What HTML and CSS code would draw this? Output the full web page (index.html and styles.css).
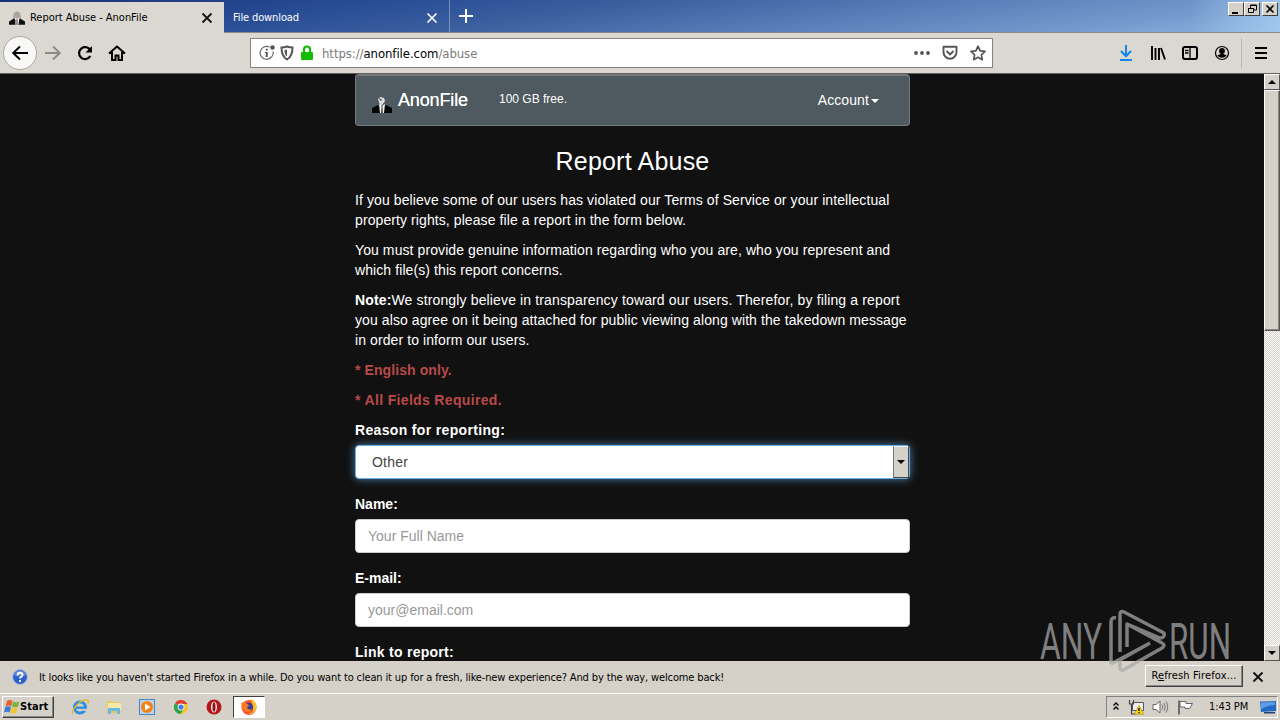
FILE: index.html
```html
<!DOCTYPE html>
<html lang="en">
<head>
<meta charset="utf-8">
<title>Report Abuse - AnonFile</title>
<link rel="stylesheet" href="styles.css">
</head>
<body>
<div class="desktop">
  <header class="titlebar">
    <div class="tab active">
      <svg class="favicon" width="16" height="14" viewBox="0 0 20 17"><path d="M6 2 10 0l4 2 1 7H5z" fill="#aaa69e"/><path d="M0 17v-4l6-4 4 3 4-3 6 4v4z" fill="#111"/><path d="m8 8 2 2 3-2-1 9H8z" fill="#eee"/><path d="m9 10 2 0 0 7-2 0z" fill="#777"/></svg>
      <span class="t-active">Report Abuse - AnonFile</span>
      <svg class="close" width="12" height="12" viewBox="0 0 12 12"><path d="m1.500 1.500 9 9m0-9-9 9" stroke="#111" stroke-width="1.800"/></svg>
    </div>
    <div class="tab second">
      <span class="t-second">File download</span>
      <svg class="close" width="12" height="12" viewBox="0 0 12 12"><path d="m1.500 1.500 9 9m0-9-9 9" stroke="#fff" stroke-width="1.600"/></svg>
    </div>
    <svg class="plus" width="14" height="14" viewBox="0 0 14 14"><path d="M7 0v14M0 7h14" stroke="#fff" stroke-width="2"/></svg>
    <div class="winbtns">
      <span class="wbtn"><svg width="14" height="12"><path d="M3 9h6v2H3z"/></svg></span>
      <span class="wbtn"><svg width="14" height="12"><path d="M5.500 5V2h6v5H9M5 2.500h7M3.500 5.500h5v4h-5zM3 5.500h6" fill="none" stroke="#000"/></svg></span>
      <span class="wbtn last"><svg width="14" height="12"><path d="m3.500 2.500 7 7m0-7-7 7" stroke="#000" stroke-width="1.600"/></svg></span>
    </div>
  </header>

  <nav class="toolbar">
    <div class="navbtns">
      <span class="back"><svg width="18" height="16" viewBox="0 0 18 16"><path d="M17 8H2m7-6.500L2.200 8 9 14.500" fill="none" stroke="#000" stroke-width="2"/></svg></span>
      <svg width="18" height="16" viewBox="0 0 18 16"><path d="M1 8h15M9 1.500 15.800 8 9 14.500" fill="none" stroke="#8d8a86" stroke-width="1.800"/></svg>
      <svg width="18" height="16" viewBox="0 0 18 16"><path d="M14.500 5.500A6 6 0 1 0 14.300 11" fill="none" stroke="#000" stroke-width="2.200"/><path d="M16 1v6.500H9.500z"/></svg>
      <svg width="18" height="16" viewBox="0 0 18 16"><path d="m1 8.500 8-7 8 7M4 7v8h3.500v-4.500h3V15H14V7" fill="none" stroke="#000" stroke-width="2"/></svg>
    </div>
    <div class="urlbar">
      <svg width="16" height="16" viewBox="0 0 16 16"><path d="M10.500 2A6.500 6.500 0 1 0 14 6.500" fill="none" stroke="#666" stroke-width="1.200"/><circle cx="13.500" cy="2.500" r="2.300" fill="#555"/><path d="M6.800 3.700h1.900v1.900H6.800zM6 7h2.700v5H6.800V8H6z" fill="#555"/></svg>
      <svg class="shield" width="14" height="16" viewBox="0 0 14 16"><path d="M7 1.500c2 .8 3.500 1 5.500 1 0 6-1 9.500-5.500 12C2.500 12 1.500 8.500 1.500 2.500c2 0 3.500-.2 5.500-1z" fill="none" stroke="#555" stroke-width="2"/><path d="M7 4.500c-1.200.5-1.600.5-2.600.7.200 3 .8 5 2.600 6.300z" fill="#555"/></svg>
      <svg class="lock" width="14" height="16" viewBox="0 0 14 16"><path d="M4 8V4.500a3 3 0 0 1 6 0V8" fill="none" stroke="#12bc00" stroke-width="2.200"/><rect x="1" y="7" width="12" height="8" rx="1" fill="#12bc00"/></svg>
      <span class="url"><i>https://</i>anonfile.com<i>/abuse</i></span>
      <div class="urlicons">
        <svg width="16" height="16" viewBox="0 0 16 16"><g fill="#555"><circle cx="2" cy="8" r="1.900"/><circle cx="8" cy="8" r="1.900"/><circle cx="14" cy="8" r="1.900"/></g></svg>
        <svg width="16" height="16" viewBox="0 0 16 16"><path d="M1.500 1.700h13v5.500a6.500 6.500 0 0 1-13 0z" fill="none" stroke="#555" stroke-width="1.900" stroke-linejoin="round"/><path d="m4.500 6 3.500 3.500L11.500 6" fill="none" stroke="#555" stroke-width="1.900"/></svg>
        <svg width="16" height="16" viewBox="0 0 16 16"><path d="m8 1.200 2.100 4.600 4.900.6-3.600 3.400.9 4.900L8 12.300l-4.300 2.400.9-4.900L1 6.400l4.900-.6z" fill="none" stroke="#555" stroke-width="1.700" stroke-linejoin="round"/></svg>
      </div>
    </div>
    <div class="tools">
      <svg width="16" height="16" viewBox="0 0 16 16"><path d="M8 0v11M3 6l5 5.200L13 6M2 15h12" fill="none" stroke="#1486f0" stroke-width="2"/></svg>
      <svg width="16" height="16" viewBox="0 0 16 16"><path d="M2 1v14M5.500 3v12M9 3v12M11 3l4 11.500" fill="none" stroke="#000" stroke-width="1.900"/></svg>
      <svg width="16" height="16" viewBox="0 0 16 16"><rect x="1" y="2" width="14" height="12" rx="2" fill="none" stroke="#000" stroke-width="2"/><path d="M8 2v12M3 5.500h3.500M3 8h3.500" stroke="#000" stroke-width="1.300"/></svg>
      <svg width="16" height="16" viewBox="0 0 16 16"><circle cx="8" cy="8" r="6.500" fill="none" stroke="#000" stroke-width="1.200"/><circle cx="8" cy="6" r="2.900"/><path d="M3.500 10.500c2-2 7-2 9 0-2 3-7 3-9 0z"/></svg>
      <span class="sep"></span>
      <svg width="14" height="14" viewBox="0 0 14 14"><path d="M1 2h12M1 7h12M1 12h12" stroke="#000" stroke-width="2"/></svg>
    </div>
  </nav>

  <div class="viewport">
    <main class="page">
      <div class="container">
        <div class="navbar">
          <svg class="logo" width="20" height="17" viewBox="0 0 20 17"><path d="M6 3 8 1l4 1 1 3-3 4H8z" fill="#dfe2e3"/><path d="m6 1 3 4 1-1z" fill="#20282c"/><path d="M0 17v-5l6-3 4 3 4-3 6 3v5z" fill="#050505"/><path d="m7 8 3 2 3-2-1 9H8z" fill="#f4f4f4"/><path d="m9.500 10 1 0 .5 7H9z" fill="#555"/></svg>
          <span class="brand">AnonFile</span>
          <span class="free">100 GB free.</span>
          <span class="account">Account</span><span class="caret"></span>
        </div>
        <h1>Report Abuse</h1>
        <p>If you believe some of our users has violated our Terms of Service or your intellectual<br>property rights, please file a report in the form below.</p>
        <p>You must provide genuine information regarding who you are, who you represent and<br>which file(s) this report concerns.</p>
        <p><span class="loose"><b>Note:</b>We strongly believe in transparency toward our users. Therefor, by filing a report</span><br>you also agree on it being attached for public viewing along with the takedown message<br>in order to inform our users.</p>
        <p class="danger">* English only.</p>
        <p class="danger wide">* All Fields Required.</p>
        <div class="label wide">Reason for reporting:</div>
        <div class="field select"><span>Other</span><i class="drop"></i></div>
        <div class="label">Name:</div>
        <div class="field">Your Full Name</div>
        <div class="label">E-mail:</div>
        <div class="field">your@email.com</div>
        <div class="label link">Link to report:</div>
      </div>
    </main>
    <div class="scrollbar">
      <span class="sbtn up"></span>
      <span class="thumb"></span>
      <span class="track"></span>
      <span class="sbtn down"></span>
    </div>
  </div>

  <div class="notice">
    <svg width="16" height="16" viewBox="0 0 16 16"><circle cx="8" cy="8" r="7.400" fill="#2c5fc9" stroke="#a9bddf"/><path d="M2 6a6.300 6.300 0 0 1 12 0c-3 2-9 2-12 0z" fill="#7ea6ea" opacity=".6"/><path d="M5.600 6.200c0-3.300 5-3.200 4.900-.2C10.500 7.800 8 7.800 8 9.600M8 11v2" fill="none" stroke="#fff" stroke-width="1.900"/></svg>
    <span class="msg">It looks like you haven't started Firefox in a while. Do you want to clean it up for a fresh, like-new experience? And by the way, welcome back!</span>
    <span class="refresh"><span>R<u>e</u>fresh Firefox...</span></span>
    <svg class="nclose" width="12" height="12" viewBox="0 0 12 12"><path d="m1.500 1.500 9 9m0-9-9 9" stroke="#111" stroke-width="1.900"/></svg>
  </div>

  <footer class="taskbar">
    <span class="start">
      <svg width="16" height="16" viewBox="0 0 16 16"><path d="M3 2q2.500-1.800 5.500 0L7.300 7.300q-2.500-1.500-5.800 0z" fill="#e8622a"/><path d="M9 2.500q2.500 1.600 6.500 0l-1.500 5.300q-2.800 1.300-6 0z" fill="#7cb642"/><path d="M1.300 8q2.500-1.500 5.700 0L5.700 13.500q-2.500-1.500-5.700 0z" fill="#3a7bd5"/><path d="M7.600 8.500q2.500 1.400 6.100 0L12.300 14q-3 1.200-6-.3z" fill="#f7c62f"/></svg>
      <b>Start</b>
    </span>
    <div class="launch">
      <svg width="18" height="18" viewBox="0 0 18 18"><circle cx="9" cy="9.500" r="5.500" fill="none" stroke="#2b8fdf" stroke-width="3"/><path d="M4 8.500h11v2.300H4z" fill="#2b8fdf"/><path d="M12 10.800h5v2h-5z" fill="#d4d0c8"/><path d="M2 16C-1 12 12-1 17 2.500c1 1-.5 3-.5 3" fill="none" stroke="#e8b92e" stroke-width="1.400"/></svg>
      <svg width="18" height="18" viewBox="0 0 18 18"><path d="M2 3h5l1 1h8v11H2z" fill="#e9c85e"/><path d="M3 5h13v8H3z" fill="#f8e9a6"/><path d="M3 10h12v6h-3v-3H6v3H3z" fill="#69b8e6"/></svg>
      <svg width="18" height="18" viewBox="0 0 18 18"><rect x="1.500" y="1.500" width="15" height="15" fill="#b9d5ee" stroke="#4b86c3"/><circle cx="9" cy="9" r="6" fill="#f58216"/><path d="m7 5.500 5.500 3.500L7 12.500z" fill="#fff"/></svg>
      <svg width="18" height="18" viewBox="0 0 18 18"><circle cx="9" cy="9" r="7" fill="#f4c522"/><path d="M9 9 3 5.200A7 7 0 0 1 15.300 6H9z" fill="#df4034"/><path d="M3 5.200A7 7 0 0 0 8.500 16L12 10.500 9 9z" fill="#2fa350"/><circle cx="9" cy="9" r="3.400" fill="#fff"/><circle cx="9" cy="9" r="2.600" fill="#3f7fe8"/></svg>
      <svg width="18" height="18" viewBox="0 0 18 18"><circle cx="9" cy="9" r="7.500" fill="#b5161b"/><ellipse cx="9" cy="9" rx="3" ry="5.600" fill="#f4eaea"/><ellipse cx="9" cy="9" rx="1.500" ry="4.800" fill="#8d1115"/></svg>
    </div>
    <span class="running">
      <svg width="18" height="18" viewBox="0 0 18 18"><circle cx="9" cy="9.500" r="7.500" fill="#f5542a"/><path d="M11 1c5 2 6.500 7 5 10.500S10 17.500 7 15.500c5 .5 7-3 6-6.500z" fill="#fdc229"/><circle cx="8.800" cy="9" r="4.300" fill="#37409b"/><path d="M2 4c1 1 2 1 3.500 1C7 6 9 6.500 9 8c-2 0-2.500 2-1 3 2 1 3 .5 4 0-1 3-5 4-8 1.500S1 6 2 4z" fill="#fb7a22"/></svg>
    </span>
    <div class="tray">
      <svg width="8" height="12" viewBox="0 0 8 12"><path d="m1.500 4.500 2.500-2.500 2.500 2.500M1.500 8.500l2.500-2.500 2.500 2.500" fill="none" stroke="#000" stroke-width="1.400"/></svg>
      <svg width="16" height="16" viewBox="0 0 16 16"><path d="M4.500 3.500h11v8h-11z" fill="#eee" stroke="#555"/><path d="M1.500 1v4h4V1M3.500 5v10h5" fill="none" stroke="#444" stroke-width="1.200"/><path d="m11 6.500 4.800 8.800H6.300z" fill="#f9d71c" stroke="#a98900" stroke-width=".6"/><path d="M11 9v3m0 1v1.200" stroke="#000" stroke-width="1.300"/></svg>
      <svg width="17" height="16" viewBox="0 0 17 16"><path d="M1 5.500h3L8 2v12L4 10.500H1z" fill="#fff" stroke="#666"/><path d="M10 5.500q1.500 2.500 0 5M12 4q2.500 4 0 8M14 2.500q3.500 5.500 0 11" fill="none" stroke="#777"/></svg>
      <svg width="17" height="16" viewBox="0 0 17 16"><path d="M2 1.500v14" stroke="#555" stroke-width="1.600"/><path d="M3 2.500h6v2h6.500l-3 5H8v-1.500H3z" fill="#fff" stroke="#666"/></svg>
      <span class="clock">1:43 PM</span>
      <svg class="monitor" width="16" height="14" viewBox="0 0 16 14"><path d="M0 1.500 16 1v10L1 12z" fill="#2369c4"/><path d="M1 2.500 15 2v3Q8 5 1 9z" fill="#5e9be8"/><path d="M4 12h11v1.500H4z" fill="#23436e"/></svg>
    </div>
  </footer>

  <svg class="watermark" width="204" height="68" viewBox="0 0 204 68">
    <g class="wm-text"><text x="4" y="52" textLength="62" lengthAdjust="spacingAndGlyphs">ANY</text><text x="133" y="52" textLength="62" lengthAdjust="spacingAndGlyphs">RUN</text></g>
    <path d="M80 11q-5-1-5 4v42M91 40V17l33 14q5 0 4-5L88 5q-4-2-4 3v37M84 54v6q0 5 5 2l37-21q4-3 0-5L91 17M75 57l39-21M84 53l30-17" fill="none" stroke="#aaa" stroke-width="3.500" stroke-linejoin="round"/>
  </svg>
</div>
</body>
</html>
```
FILE: styles.css
```css
* { box-sizing: border-box; }
body { margin: 0; }
svg { display: block; flex: none; }
.desktop { position: relative; width: 1280px; height: 720px; overflow: hidden; display: flex; flex-direction: column; background: #d5d1c9; font: 11px/14px "DejaVu Sans Condensed", "DejaVu Sans", sans-serif; color: #000; white-space: nowrap; }

.titlebar { height: 33px; flex: none; display: flex; align-items: flex-start; background: linear-gradient(90deg, rgba(160,200,240,0) 1190px, rgba(165,205,240,.8) 1280px), linear-gradient(172deg, #16337a 0, #284c95 25%, #3c5f9f 44%, #5b7db9 65%, #7599cd 85%, #8db2df 100%); border-bottom: 1px solid #8b8b88; }
.tab { display: flex; align-items: center; }
.active { width: 224px; height: 32px; margin-top: 2px; padding: 0 11px 1px 9px; background: #dbd8d1; }
.favicon { margin-right: 5px; }
.close { margin-left: auto; }
.second { width: 226px; height: 32px; padding: 3px 11px 0 9px; border-right: 1px solid #7891bd; color: #fff; }
.plus { margin: 9px 0 0 9px; }
.t-active { letter-spacing: -.03px; }
.t-second { letter-spacing: -.12px; }
.winbtns { display: flex; margin: 2px 2px 0 auto; }
.wbtn { width: 16px; height: 14px; background: #d5d1c9; border: 1px solid; border-color: #fff #404040 #404040 #fff; }
.last { margin-left: 2px; }

.toolbar { height: 41px; flex: none; display: flex; align-items: center; background: #dbd8d1; border-bottom: 1px solid #63625f; }
.navbtns { width: 250px; display: flex; align-items: center; gap: 14px; padding-left: 3px; }
.back { width: 34px; height: 34px; margin-right: -7px; display: flex; align-items: center; justify-content: center; background: #f8f8f6; border: 1px solid #aaa69f; border-radius: 50%; }
.urlbar { width: 743px; height: 30px; display: flex; align-items: center; background: #fff; border: 1px solid #858381; padding: 0 6px 0 8px; }
.shield { margin-left: 5px; }
.lock { margin-left: 6px; }
.url { margin: 1px 0 0 8px; font-size: 13px; letter-spacing: -.06px; }
.url i { font-style: normal; color: #7b7b7b; }
.urlicons { display: flex; gap: 12px; margin-left: auto; }
.tools { display: flex; align-items: center; gap: 16px; margin-left: auto; padding-right: 12px; }
.sep { width: 1px; height: 30px; background: #bbb7b0; margin-left: -5px; margin-right: -4px; }

.viewport { height: 587px; flex: none; display: flex; }
.page { width: 1264px; overflow: hidden; background: #111; color: #fff; font: 14px/20px "Liberation Sans", Arial, sans-serif; }
.container { width: 555px; margin-left: 355px; }
.navbar { height: 52px; display: flex; align-items: center; padding: 0 30px 0 16px; background: #4e5a60; border: 1px solid #737c80; border-top: 2px solid #747973; border-radius: 4px; }
.logo { margin-top: 8px; }
.brand { margin: -2px 0 0 6px; width: 101px; font-size: 18px; text-shadow: 0 0 .6px #fff; letter-spacing: -.15px; }
.free { font-size: 12px; margin-top: -3px; }
.account { margin: -2px 0 0 auto; letter-spacing: .1px; }
.caret { margin-left: 2px; border: 4px solid transparent; border-top-color: #fff; border-bottom: 0; }
.container h1 { margin: 20px 0 13px; font-size: 25px; line-height: 31px; font-weight: 400; text-align: center; letter-spacing: .2px; }
.container p { margin: 0 0 10px; letter-spacing: .09px; }
.container .loose { letter-spacing: .14px; }
.container .danger { color: #b94a48; font-weight: 700; }
.container .wide { letter-spacing: .34px; }
.label { height: 20px; margin-bottom: 5px; font-weight: 700; }
.link { letter-spacing: .27px; }
.field { height: 34px; margin-bottom: 15px; padding: 6px 12px; background: #fff; border: 1px solid #ccc; border-radius: 4px; color: #999; }
.select { display: flex; justify-content: space-between; padding: 0 0 0 16px; align-items: center; color: #444; border-color: #66afe9; box-shadow: 0 0 8px rgba(102,175,233,.7); letter-spacing: .2px; }
.drop { width: 16px; height: 32px; display: flex; align-items: center; justify-content: center; background: #d5d1c9; border: 1px solid; border-color: #eee #444 #444 #777; }
.drop::after { content: ""; border: 4px solid transparent; border-top-color: #000; border-bottom: 0; }

.scrollbar { width: 16px; display: flex; flex-direction: column; background: #e9e7e3; }
.sbtn { height: 16px; display: flex; align-items: center; justify-content: center; background: #d5d1c9; border: 1px solid; border-color: #fff #555 #555 #fff; }
.up::after { content: ""; border: 4px solid transparent; border-bottom-color: #000; border-top: 0; }
.down::after { content: ""; border: 4px solid transparent; border-top-color: #000; border-bottom: 0; }
.thumb { height: 241px; background: #d5d1c9; border: 1px solid; border-color: #fff #555 #555 #fff; box-shadow: inset -1px -1px #888; }
.track { flex: 1; background: repeating-conic-gradient(#fff 0 25%, #d5d1c9 0 50%) 0 0 / 2px 2px; }

.notice { height: 32px; flex: none; display: flex; align-items: center; padding: 0 16px 0 12px; }
.msg { margin: 1px 0 0 11px; letter-spacing: -.138px; }
.refresh { width: 98px; height: 22px; margin: -2px 9px 0 auto; display: flex; align-items: center; justify-content: center; border: 1px solid; border-color: #fff #404040 #404040 #fff; box-shadow: inset -1px -1px #888; letter-spacing: .15px; }

.taskbar { height: 27px; flex: none; display: flex; align-items: center; border-top: 1px solid #fff; padding: 0 2px; }
.start { width: 52px; height: 22px; padding-left: 1px; display: flex; align-items: center; border: 1px solid; border-color: #fff #404040 #404040 #fff; box-shadow: inset -1px -1px #888; }
.start b { letter-spacing: .05px; }
.launch { display: flex; gap: 15.600px; margin-left: 17px; }
.running { width: 32px; height: 22px; margin-left: 10px; display: flex; align-items: center; justify-content: center; background: #fff; border: 1px solid; border-color: #404040 #fff #fff #404040; }
.tray { width: 172px; height: 22px; margin-left: auto; padding: 0 1px 0 5px; display: flex; align-items: center; gap: 8px; border: 1px solid; border-color: #808080 #fff #fff #808080; }
.clock { margin-left: 7px; letter-spacing: -.1px; }
.monitor { margin-left: auto; }

.watermark { position: absolute; left: 1036px; top: 607px; opacity: .72; }
.wm-text { font: 400 50px/60px Roboto, sans-serif; fill: #aaa; }
```
